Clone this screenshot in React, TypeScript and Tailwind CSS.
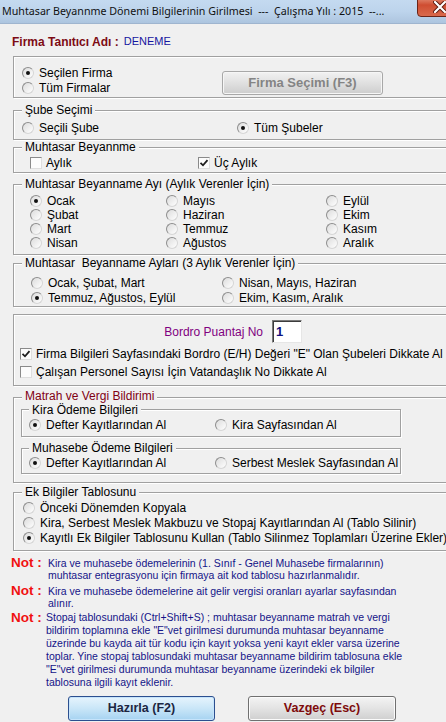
import React from "react";

type RadioProps = { label: string; checked?: boolean; className?: string };

const Radio: React.FC<RadioProps> = ({ label, checked, className = "" }) => (
  <div className={`flex items-center h-[14px] whitespace-nowrap ${className}`}>
    <span className="flex items-center justify-center w-[12px] h-[12px] shrink-0 rounded-full border border-[#8d8d8d] border-b-[#d6d6d6] border-r-[#d6d6d6] bg-gradient-to-br from-[#dcdcdc] to-[#ffffff]">
      {checked && <span className="w-[4px] h-[4px] rounded-full bg-[#111111]" />}
    </span>
    <span className="ml-[5px]">{label}</span>
  </div>
);

const Check: React.FC<RadioProps> = ({ label, checked, className = "" }) => (
  <div className={`flex items-center h-[14px] whitespace-nowrap ${className}`}>
    <span className="flex items-center justify-center w-[12px] h-[12px] shrink-0 border border-[#8a8a8a] border-b-[#dedede] border-r-[#dedede] bg-[#fcfcfc]">
      {checked && (
        <svg width="10" height="10" viewBox="0 0 10 10">
          <polyline points="1.5,4.8 4,7.3 8.5,2.2" fill="none" stroke="#1e1e1e" strokeWidth="1.8" />
        </svg>
      )}
    </span>
    <span className="ml-[4px]">{label}</span>
  </div>
);

type GroupProps = {
  title?: string;
  titleClass?: string;
  className?: string;
  children: React.ReactNode;
};

// etched windows group box
const Group: React.FC<GroupProps> = ({ title, titleClass = "", className = "", children }) => (
  <div className={`relative border border-[#a0a0a0] shadow-[inset_1px_1px_0_#ffffff,1px_1px_0_#ffffff] ${className}`}>
    {title && (
      <span className={`absolute px-[3px] bg-[#f0f0f0] leading-[11px] whitespace-pre ${titleClass}`}>
        {title}
      </span>
    )}
    {children}
  </div>
);

const Note: React.FC<{ labelW: string; lh: string; lines: string[]; className?: string }> = ({
  labelW,
  lh,
  lines,
  className = "",
}) => (
  <div className={`flex ${className}`}>
    <span className={`${labelW} ${lh} shrink-0 font-bold text-[13.5px] text-[#f01010]`}>Not :</span>
    <div className={`${lh} text-[10.5px] text-[#141488] whitespace-nowrap`}>
      {lines.map((l, i) => (
        <div key={i}>{l}</div>
      ))}
    </div>
  </div>
);

export default function App() {
  return (
    <div className="relative w-[446px] h-[722px] overflow-hidden bg-[#f0f0f0] text-black text-[12px] font-['Liberation_Sans',Arial,sans-serif]">
      {/* Başlık çubuğu */}
      <div className="relative h-[24px] border-b border-[#9fb5cf] bg-gradient-to-b from-[#c4daf0] via-[#bdd4ec] to-[#adc5df]">
        <div className="pl-[2px] pt-[3px] leading-[16px] text-[10.7px] font-['Noto_Sans',sans-serif] text-[#111111] whitespace-pre">
          Muhtasar Beyannme Dönemi Bilgilerinin Girilmesi  ---  Çalışma Yılı : 2015  --...
        </div>
        <div className="absolute left-[417px] -top-[7px] w-[46px] h-[24px] rounded-b-[4px] border border-[#6b2418] bg-gradient-to-b from-[#e8a792] via-[#cf4d31] to-[#d9694c] flex items-center justify-center">
          <svg width="14" height="12" viewBox="0 0 14 12" className="mt-[4px] -ml-[1px]">
            <path d="M2 1 L12 11 M12 1 L2 11" stroke="#5a1a10" strokeWidth="4" strokeLinecap="round" />
            <path d="M2 1 L12 11 M12 1 L2 11" stroke="#ffffff" strokeWidth="2.2" strokeLinecap="round" />
          </svg>
        </div>
      </div>

      {/* Firma */}
      <div className="mt-[11px] ml-[12px] h-[13px] flex items-center whitespace-nowrap">
        <span className="font-bold text-[12px] text-[#7d0b14]">Firma Tanıtıcı Adı :</span>
        <span className="ml-[5px] text-[11px] text-[#1616a0]">DENEME</span>
      </div>

      <div className="ml-[13px] w-[470px]">
        <Group className="mt-[8px] h-[42px]">
          <div className="flex pt-[8px] pl-[8px]">
            <div className="w-[200px]">
              <Radio label="Seçilen Firma" checked className="h-[15px]" />
              <Radio label="Tüm Firmalar" className="h-[15px]" />
            </div>
            <div className="mt-[6px] w-[161px] h-[24px] rounded-[3px] border border-[#a8a8a8] bg-gradient-to-b from-[#f2f2f2] via-[#e0e0e0] to-[#cdcdcd] shadow-[inset_0_0_0_1px_#f6f6f6] flex items-center justify-center font-bold text-[13px] text-[#848484]">
              Firma Seçimi (F3)
            </div>
          </div>
        </Group>

        <Group title="Şube Seçimi" titleClass="left-[8px] -top-[6px]" className="mt-[12px] h-[30px]">
          <div className="flex pt-[10px] pl-[8px]">
            <Radio label="Seçili Şube" className="w-[215px]" />
            <Radio label="Tüm Şubeler" checked />
          </div>
        </Group>

        <Group title="Muhtasar Beyannme" titleClass="left-[8px] -top-[6px]" className="mt-[7px] h-[26px]">
          <div className="flex pt-[8px] pl-[16px]">
            <Check label="Aylık" className="w-[168px]" />
            <Check label="Üç Aylık" checked />
          </div>
        </Group>

        <Group title="Muhtasar Beyanname Ayı (Aylık Verenler İçin)" titleClass="left-[8px] -top-[6px]" className="mt-[11px] h-[71px]">
          <div className="flex pt-[9px] pl-[16px]">
            <div className="w-[136px]">
              <Radio label="Ocak" checked />
              <Radio label="Şubat" />
              <Radio label="Mart" />
              <Radio label="Nisan" />
            </div>
            <div className="w-[160px]">
              <Radio label="Mayıs" />
              <Radio label="Haziran" />
              <Radio label="Temmuz" />
              <Radio label="Ağustos" />
            </div>
            <div>
              <Radio label="Eylül" />
              <Radio label="Ekim" />
              <Radio label="Kasım" />
              <Radio label="Aralık" />
            </div>
          </div>
        </Group>

        <Group title="Muhtasar  Beyanname Ayları (3 Aylık Verenler İçin)" titleClass="left-[8px] -top-[6px]" className="mt-[8px] h-[44px]">
          <div className="flex pt-[11px] pl-[17px]">
            <div className="w-[191px]">
              <Radio label="Ocak, Şubat, Mart" className="h-[15px]" />
              <Radio label="Temmuz, Ağustos, Eylül" checked className="h-[15px]" />
            </div>
            <div>
              <Radio label="Nisan, Mayıs, Haziran" className="h-[15px]" />
              <Radio label="Ekim, Kasım, Aralık" className="h-[15px]" />
            </div>
          </div>
        </Group>

        <Group className="mt-[7px] h-[72px]">
          <div className="flex pt-[5px]">
            <div className="w-[258px] h-[23px] pr-[9px] flex items-center justify-end text-[#800080]">Bordro Puantaj No</div>
            <div className="w-[30px] h-[23px] pl-[3px] flex items-center bg-white border border-[#7a7a7a] border-b-[#e6e6e6] border-r-[#e6e6e6] shadow-[inset_1px_1px_0_#3c3c3c] font-bold text-[13px] text-[#101080]">
              1
            </div>
          </div>
          <div className="pl-[6px]">
            <Check label={'Firma Bilgileri Sayfasındaki Bordro (E/H) Değeri "E" Olan Şubeleri Dikkate Al'} checked className="mt-[4px]" />
            <Check label="Çalışan Personel Sayısı İçin Vatandaşlık No Dikkate Al" className="mt-[4px]" />
          </div>
        </Group>

        <Group title="Matrah ve Vergi Bildirimi" titleClass="left-[8px] -top-[7px] text-[#800014]" className="mt-[11px] h-[86px]">
          <div className="pt-[11px] pl-[7px]">
            <Group title="Kira Ödeme Bilgileri" titleClass="left-[7px] -top-[5px]" className="w-[380px] h-[28px]">
              <div className="flex pt-[8px] pl-[7px]">
                <Radio label="Defter Kayıtlarından Al" checked className="w-[186px]" />
                <Radio label="Kira Sayfasından Al" />
              </div>
            </Group>
            <Group title="Muhasebe Ödeme Bilgileri" titleClass="left-[7px] -top-[6px]" className="mt-[11px] w-[380px] h-[26px]">
              <div className="flex pt-[7px] pl-[7px]">
                <Radio label="Defter Kayıtlarından Al" checked className="w-[186px]" />
                <Radio label="Serbest Meslek Sayfasından Al" />
              </div>
            </Group>
          </div>
        </Group>

        <Group title="Ek Bilgiler Tablosunu" titleClass="left-[8px] -top-[6px]" className="mt-[9px] h-[59px]">
          <div className="pt-[7px] pl-[9px]">
            <Radio label="Önceki Dönemden Kopyala" className="h-[15px]" />
            <Radio label="Kira, Serbest Meslek Makbuzu ve Stopaj Kayıtlarından Al (Tablo Silinir)" className="h-[15px]" />
            <Radio label="Kayıtlı Ek Bilgiler Tablosunu Kullan (Tablo Silinmez Toplamları Üzerine Ekler)" checked className="h-[15px]" />
          </div>
        </Group>
      </div>

      {/* Notlar */}
      <div className="pl-[11px] mt-[6px]">
        <Note
          labelW="w-[37px]"
          lh="leading-[12px]"
          lines={[
            "Kira ve muhasebe ödemelerinin (1. Sınıf - Genel Muhasebe firmalarının)",
            "muhtasar entegrasyonu için firmaya ait kod tablosu hazırlanmalıdır.",
          ]}
        />
        <Note
          labelW="w-[37px]"
          lh="leading-[12px]"
          className="mt-[4px]"
          lines={["Kira ve muhasebe ödemelerine ait gelir vergisi oranları ayarlar sayfasından", "alınır."]}
        />
        <Note
          labelW="w-[35px]"
          lh="leading-[13px]"
          className="mt-[2px]"
          lines={[
            "Stopaj tablosundaki (Ctrl+Shift+S) ; muhtasar beyanname matrah ve vergi",
            'bildirim toplamına ekle "E"vet girilmesi durumunda muhtasar beyanname',
            "üzerinde bu kayda ait tür kodu için kayıt yoksa yeni kayıt ekler varsa üzerine",
            "toplar. Yine stopaj tablosundaki muhtasar beyanname bildirim tablosuna ekle",
            '"E"vet girilmesi durumunda muhtasar beyanname üzerindeki ek bilgiler',
            "tablosuna ilgili kayıt eklenir.",
          ]}
        />
      </div>

      {/* Butonlar */}
      <div className="flex pl-[68px] gap-[33px] mt-[7px] font-bold text-[12.5px]">
        <button className="w-[147px] h-[25px] rounded-[3px] border border-[#2c4f8f] bg-gradient-to-b from-[#e6f4fd] via-[#c9e6f8] to-[#a6d3f1] shadow-[inset_0_0_0_1px_#c6e4fb] text-[#1c2642]">
          Hazırla (F2)
        </button>
        <button className="w-[148px] h-[25px] rounded-[3px] border border-[#707070] bg-gradient-to-b from-[#f4f4f4] via-[#e3e3e3] to-[#cfcfcf] shadow-[inset_0_0_0_1px_#fbfbfb] text-[#7e0b0b]">
          Vazgeç (Esc)
        </button>
      </div>
    </div>
  );
}
